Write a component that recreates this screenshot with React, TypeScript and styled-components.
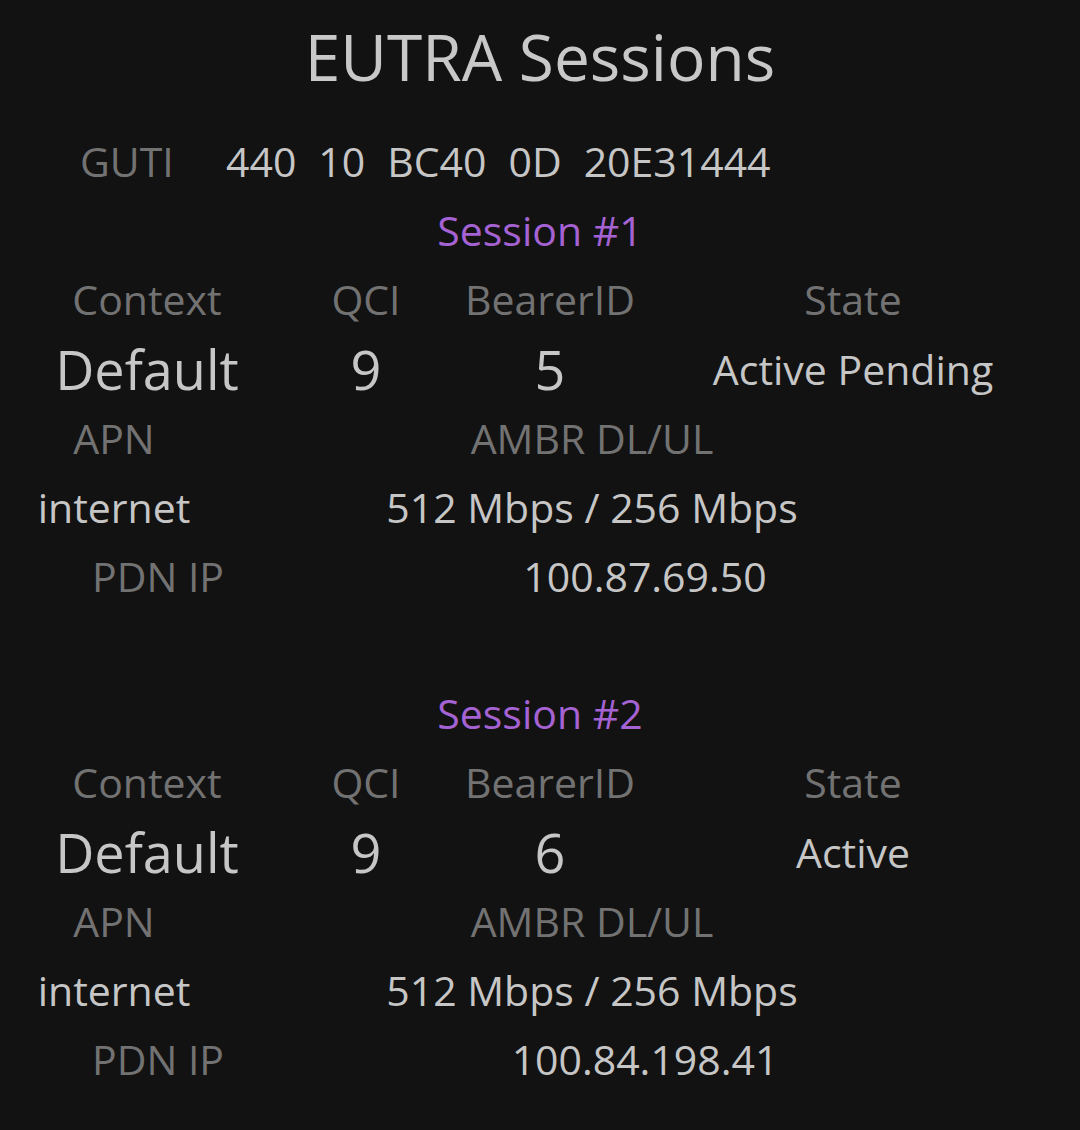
import React from "react";
import styled, { createGlobalStyle } from "styled-components";

const GlobalStyle = createGlobalStyle`
  html, body {
    margin: 0;
    padding: 0;
    background: #121212;
    overflow: hidden;
  }
  body {
    font-family: "Open Sans", "Noto Sans", sans-serif;
    color: #c6c6c6;
  }
`;

const Page = styled.main`
  width: 1080px;
  min-height: 1130px;
  background: #121212;
  display: flex;
  flex-direction: column;
`;

const Title = styled.h1`
  margin: 0;
  height: 114px;
  line-height: 114px;
  font-size: 64px;
  font-weight: 400;
  text-align: center;
  color: #c8c8c8;
`;

const GutiRow = styled.div`
  margin-top: 13px;
  height: 69px;
  line-height: 69px;
  display: flex;
  align-items: center;
  padding-left: 80px;
  font-size: 41px;
  white-space: nowrap;
`;

const GutiLabel = styled.span`
  width: 146px;
  color: #727272;
`;

const GutiValue = styled.span`
  display: flex;
  gap: 22px;
  color: #c6c6c6;
`;

const Session = styled.section<{ $first?: boolean }>`
  margin-top: ${(p) => (p.$first ? "0" : "68px")};
  display: flex;
  flex-direction: column;
`;

const SessionTitle = styled.h2`
  margin: 0;
  height: 69px;
  line-height: 69px;
  font-size: 41px;
  font-weight: 400;
  text-align: center;
  color: #a462d2;
`;

const FieldGrid = styled.div<{ $cols: string; $height: number }>`
  display: grid;
  grid-template-columns: ${(p) => p.$cols};
  align-items: center;
  height: ${(p) => p.$height}px;
  line-height: ${(p) => p.$height}px;
`;

const Spacer = styled.span``;

const Label = styled.span`
  justify-self: center;
  font-size: 41px;
  color: #727272;
  white-space: nowrap;
`;

const Value = styled.span<{ $big?: boolean }>`
  justify-self: center;
  font-size: ${(p) => (p.$big ? "54px" : "41px")};
  color: #c6c6c6;
  white-space: nowrap;
`;

const CONTEXT_COLS = "36px 222px 216px 152px 454px";
const APN_COLS = "228px 728px";
const PDN_COLS = "316px 658px";

type SessionData = {
  n: number;
  bearer: string;
  state: string;
  ip: string;
};

const sessions: SessionData[] = [
  { n: 1, bearer: "5", state: "Active Pending", ip: "100.87.69.50" },
  { n: 2, bearer: "6", state: "Active", ip: "100.84.198.41" },
];

function SessionBlock({ s, first }: { s: SessionData; first?: boolean }) {
  return (
    <Session $first={first}>
      <SessionTitle>Session #{s.n}</SessionTitle>
      <FieldGrid $cols={CONTEXT_COLS} $height={69}>
        <Spacer />
        <Label>Context</Label>
        <Label>QCI</Label>
        <Label>BearerID</Label>
        <Label>State</Label>
      </FieldGrid>
      <FieldGrid $cols={CONTEXT_COLS} $height={70}>
        <Spacer />
        <Value $big>Default</Value>
        <Value $big>9</Value>
        <Value $big>{s.bearer}</Value>
        <Value>{s.state}</Value>
      </FieldGrid>
      <FieldGrid $cols={APN_COLS} $height={69}>
        <Label>APN</Label>
        <Label>AMBR DL/UL</Label>
      </FieldGrid>
      <FieldGrid $cols={APN_COLS} $height={69}>
        <Value>internet</Value>
        <Value>512 Mbps / 256 Mbps</Value>
      </FieldGrid>
      <FieldGrid $cols={PDN_COLS} $height={69}>
        <Label>PDN IP</Label>
        <Value>{s.ip}</Value>
      </FieldGrid>
    </Session>
  );
}

export default function App() {
  return (
    <>
      <GlobalStyle />
      <Page>
        <Title>EUTRA Sessions</Title>
        <GutiRow>
          <GutiLabel>GUTI</GutiLabel>
          <GutiValue>
            <span>440</span>
            <span>10</span>
            <span>BC40</span>
            <span>0D</span>
            <span>20E31444</span>
          </GutiValue>
        </GutiRow>
        {sessions.map((s, i) => (
          <SessionBlock key={s.n} s={s} first={i === 0} />
        ))}
      </Page>
    </>
  );
}
